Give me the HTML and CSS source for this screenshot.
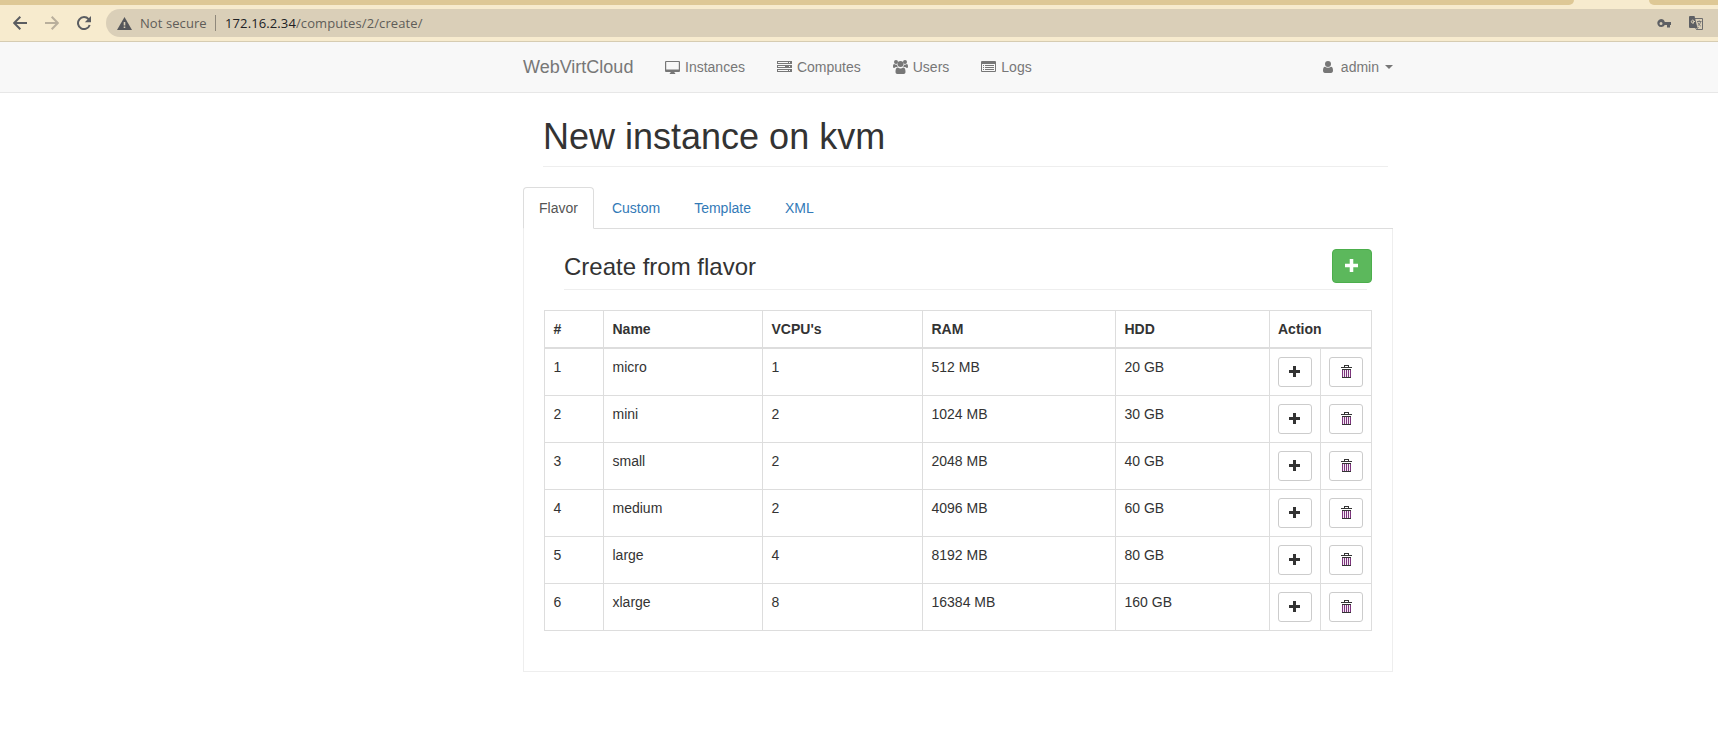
FILE: index.html
```html
<!DOCTYPE html>
<html lang="en">
<head>
<meta charset="utf-8">
<title>WebVirtCloud</title>
<link rel="stylesheet" href="styles.css">
</head>
<body>
<svg class="defs" width="0" height="0" aria-hidden="true">
  <symbol id="plus" viewBox="0 0 11 11"><path d="M4 0h3v4h4v3H7v4H4V7H0V4h4z"/></symbol>
  <symbol id="trash" viewBox="0 0 11 13"><path d="M3 0h5v2h3v1H0V2h3zM4 1v1h3V1z" fill-rule="evenodd" fill="#333"/><path d="M1 4h9v9H1z" fill="#7c357c"/><path d="M2 5h1v7H2zM4 5h1v7H4zM6 5h1v7H6zM8 5h1v7H8z" fill="#f3eaf3"/><path d="M1 4h9v1H1zM1 12h9v1H1z" fill="#333"/></symbol>
</svg>
<div class="browser">
  <div class="tabstrip"><span class="strip-left"></span><span class="strip-right"></span></div>
  <div class="toolbar">
    <svg class="back" width="14" height="14" viewBox="0 0 14 14"><path d="M14 7H1.2M7.3.8L1.2 7l6.1 6.200" /></svg>
    <svg class="forward" width="14" height="14" viewBox="0 0 14 14"><path d="M0 7h12.800M6.700.8L12.800 7l-6.100 6.200"/></svg>
    <svg class="reload" width="14" height="14" viewBox="0 0 14 14"><path d="M12.700 9A6 6 0 1 1 11.600 3.200" fill="none" stroke="#5b5d61" stroke-width="2"/><path d="M14 0v6.200H7.800z" fill="#5b5d61"/></svg>
    <div class="address">
      <svg class="warn" width="15" height="13" viewBox="0 0 15 13"><path d="M7.500 0L15 13H0z" fill="#55575b"/><path d="M6.700 5h1.600v3.500H6.700zM6.700 9.500h1.600V11H6.700z" fill="#dacfb8"/></svg>
      <span class="notsecure">Not secure</span>
      <span class="sep"></span>
      <span class="url"><b>172.16.2.34</b>/computes/2/create/</span>
      <svg class="key" width="14" height="9" viewBox="0 0 14 9"><path d="M4 0a4 4 0 0 1 3.800 3H14v3h-1v2.500h-3V6H7.800A4 4 0 1 1 4 0zM4 3a1.500 1.500 0 1 0 0 3 1.500 1.500 0 0 0 0-3z" fill="#5d5f63" fill-rule="evenodd"/></svg>
      <svg class="translate" width="14" height="14" viewBox="0 0 14 14"><path d="M6 2.500h7.500v11H7.500L6 11" fill="none" stroke="#6d6d6d"/><path d="M1 0h4.500l3 12H1a1 1 0 0 1-1-1V1a1 1 0 0 1 1-1z" fill="#5d5f63"/><path d="M6 5.500H4.200V6.600H5A1.500 1.500 0 1 1 4.800 4.500" fill="none" stroke="#dacfb8"/><path d="M8 5.500h4.500M10.200 4.300v1.200M11.700 5.500c-.4 2-1.500 3.300-3 4.300M8.800 6.500c.7 1.500 1.700 2.700 3 3.600M7.500 13.500l2-2.500" fill="none" stroke="#6d6d6d" stroke-width=".9"/></svg>
    </div>
  </div>
</div>
<header class="navbar">
  <nav class="container nav">
    <a class="brand">WebVirtCloud</a>
    <a class="item instances"><svg width="15" height="13" viewBox="0 0 15 13"><path d="M1 0h13a1 1 0 0 1 1 1v9a1 1 0 0 1-1 1H9.500v1h.7v1H4.800v-1h.7v-1H1a1 1 0 0 1-1-1V1a1 1 0 0 1 1-1zm.2 1v7.500h12.600V1z" fill-rule="evenodd"/></svg>Instances</a>
    <a class="item"><svg width="15" height="12" viewBox="0 0 15 12"><path d="M0 0h15v3H0zM1 1v1h10V1zM12 1v1h1V1zM0 4h15v3H0zM1 5v1h7V5zM12 5v1h1V5zM0 8h15v3H0zM1 9v1h10V9zM12 9v1h1V9z" fill-rule="evenodd"/></svg>Computes</a>
    <a class="item users"><svg width="15" height="14" viewBox="0 0 15 14"><circle cx="3" cy="2" r="2"/><circle cx="12" cy="2" r="2"/><circle cx="7.500" cy="4" r="3"/><path d="M0 6.500C0 5 .3 4 1.200 4c.8.700 2.300.8 3 .4C4 5.400 4.300 6.300 4.900 7H3C2 7 1.500 8 1.500 8 .5 8 0 7.500 0 6.500zM15 6.500C15 5 14.700 4 13.800 4c-.8.700-2.300.8-3 .4.2 1-.1 1.900-.7 2.600H12c1 0 1.500 1 1.500 1 1 0 1.500-.5 1.500-1.500zM2.500 12c0-2.500.5-4.500 2.400-4.500 1.600 1.200 3.600 1.200 5.200 0 1.900 0 2.400 2 2.400 4.500 0 1.300-.7 2-1.800 2H4.300c-1.100 0-1.800-.7-1.800-2z"/></svg>Users</a>
    <a class="item logs"><svg width="15" height="12" viewBox="0 0 15 12"><path d="M1 0h13a1 1 0 0 1 1 1v9a1 1 0 0 1-1 1H1a1 1 0 0 1-1-1V1a1 1 0 0 1 1-1zm0 3v7h13V3zM2 4h1v1H2zM4 4h9v1H4zM2 6h1v1H2zM4 6h9v1H4zM2 8h1v1H2zM4 8h9v1H4z" fill-rule="evenodd"/></svg>Logs</a>
    <a class="admin"><svg width="10" height="12" viewBox="0 0 10 12"><circle cx="5" cy="3" r="3"/><path d="M0 9.500C0 7.500.6 5.800 2 5.800c1.800 1.400 4.200 1.400 6 0 1.400 0 2 1.700 2 3.700 0 1.600-.7 2.500-2 2.500H2c-1.300 0-2-.9-2-2.500z"/></svg>admin<span class="caret"></span></a>
  </nav>
</header>
<main class="container">
  <h1 class="page-header">New instance on kvm</h1>
  <div class="tabs"><a class="tab active">Flavor</a><a class="tab">Custom</a><a class="tab">Template</a><a class="tab">XML</a></div>
  <section class="panel">
    <div class="panel-head">
      <h3>Create from flavor</h3>
      <button class="add"><svg width="13" height="13"><use href="#plus"/></svg></button>
    </div>
    <table class="flavors">
      <colgroup><col class="c-id"><col class="c-name"><col class="c-cpu"><col class="c-ram"><col class="c-hdd"><col class="c-act"><col class="c-act"></colgroup>
      <thead><tr><th>#</th><th>Name</th><th>VCPU's</th><th>RAM</th><th>HDD</th><th colspan="2">Action</th></tr></thead>
      <tbody>
        <tr><td>1</td><td>micro</td><td>1</td><td>512 MB</td><td>20 GB</td><td><button class="btn"><svg width="11" height="11"><use href="#plus"/></svg></button></td><td><button class="btn del"><svg width="11" height="13"><use href="#trash"/></svg></button></td></tr>
        <tr><td>2</td><td>mini</td><td>2</td><td>1024 MB</td><td>30 GB</td><td><button class="btn"><svg width="11" height="11"><use href="#plus"/></svg></button></td><td><button class="btn del"><svg width="11" height="13"><use href="#trash"/></svg></button></td></tr>
        <tr><td>3</td><td>small</td><td>2</td><td>2048 MB</td><td>40 GB</td><td><button class="btn"><svg width="11" height="11"><use href="#plus"/></svg></button></td><td><button class="btn del"><svg width="11" height="13"><use href="#trash"/></svg></button></td></tr>
        <tr><td>4</td><td>medium</td><td>2</td><td>4096 MB</td><td>60 GB</td><td><button class="btn"><svg width="11" height="11"><use href="#plus"/></svg></button></td><td><button class="btn del"><svg width="11" height="13"><use href="#trash"/></svg></button></td></tr>
        <tr><td>5</td><td>large</td><td>4</td><td>8192 MB</td><td>80 GB</td><td><button class="btn"><svg width="11" height="11"><use href="#plus"/></svg></button></td><td><button class="btn del"><svg width="11" height="13"><use href="#trash"/></svg></button></td></tr>
        <tr><td>6</td><td>xlarge</td><td>8</td><td>16384 MB</td><td>160 GB</td><td><button class="btn"><svg width="11" height="11"><use href="#plus"/></svg></button></td><td><button class="btn del"><svg width="11" height="13"><use href="#trash"/></svg></button></td></tr>
      </tbody>
    </table>
  </section>
</main>
</body>
</html>
```
FILE: styles.css
```css
* { box-sizing: border-box; }
body { margin: 0; background: #fff; color: #333; font: 14px/20px "Liberation Sans", Arial, sans-serif; overflow: hidden; }
svg { display: block; flex: none; }
.defs { position: absolute; }

.browser { height: 42px; background: #f7ebce; border-bottom: 1px solid #d6ccb2; }
.tabstrip { display: flex; justify-content: space-between; height: 5px; }
.strip-left { width: 1574px; background: #dec896; border-bottom-right-radius: 6px; }
.strip-right { width: 69px; background: #dec896; border-bottom-left-radius: 6px; }
.toolbar { display: flex; align-items: center; height: 36px; padding-left: 13px; }
.back, .forward { fill: none; stroke: #5b5d61; stroke-width: 2; }
.forward { stroke: #b9af9c; margin-left: 18px; }
.reload { margin-left: 18px; }
.address { display: flex; align-items: center; flex: 1; height: 28px; margin-left: 15px; padding-left: 11px; background: #dacfb8; border-radius: 14px 0 0 14px; font: 14px/20px "Open Sans", "Noto Sans", sans-serif; color: #5f5d58; }
.notsecure { width: 67px; margin-left: 8px; font-size: 13px; letter-spacing: .08px; white-space: nowrap; }
.sep { width: 1px; height: 16px; margin: 0 9px 0 8px; background: #8f887b; }
.url { white-space: nowrap; font-size: 13px; letter-spacing: .11px; }
.url b { font-weight: 400; color: #202124; }
.key { margin-left: auto; }
.translate { margin: 0 15px 0 18px; }

.container { width: 870px; margin-left: 523px; }
.navbar { height: 51px; background: #f8f8f8; border-bottom: 1px solid #e7e7e7; color: #777; }
.nav { display: flex; align-items: center; height: 50px; fill: #777; }
.brand { width: 142px; font-size: 18px; }
.item { display: flex; align-items: center; gap: 5px; margin-right: 32px; }
.admin { display: flex; align-items: center; margin-left: auto; }
.admin svg { margin-right: 8px; }
.caret { margin-left: 6px; border: 4px solid transparent; border-top-color: #777; border-bottom: 0; }

.page-header { height: 54px; margin: 20px 5px 20px 20px; padding-top: 4px; border-bottom: 1px solid #eee; font-size: 36px; font-weight: 400; line-height: 40px; }
.tabs { display: flex; gap: 2px; height: 42px; border-bottom: 1px solid #ddd; color: #337ab7; }
.tab { height: 42px; padding: 10px 15px; border: 1px solid transparent; border-radius: 4px 4px 0 0; }
.tab.active { color: #555; background: #fff; border-color: #ddd #ddd #fff; }
.panel { height: 443px; padding: 20px; border: 1px solid #eee; border-top: 0; }
.panel-head { display: flex; height: 41px; margin: 0 5px 20px 20px; border-bottom: 1px solid #eee; }
h3 { margin: 0; font-size: 24px; font-weight: 400; line-height: 35px; }
.add { display: flex; align-items: center; justify-content: center; width: 40px; height: 34px; margin: 0 -5px 0 auto; padding: 0 1px 1px 0; background: #5cb85c; border: 1px solid #4cae4c; border-radius: 4px; fill: #fff; }
.flavors { width: 828px; table-layout: fixed; border-collapse: separate; border-spacing: 0; border: 1px solid #ddd; border-width: 1px 0 0 1px; }
.c-id { width: 59px; }
.c-name { width: 159px; }
.c-cpu { width: 160px; }
.c-ram { width: 193px; }
.c-hdd { width: 154px; }
.c-act { width: 51px; }
.flavors th, .flavors td { padding: 8px; border: 1px solid #ddd; border-width: 0 1px 1px 0; text-align: left; vertical-align: top; }
.flavors th { height: 38px; border-bottom-width: 2px; }
.flavors td { height: 47px; }
.flavors th:nth-child(-n+5), .flavors td:nth-child(-n+5) { padding-left: 8.5px; }
.btn { display: flex; align-items: center; justify-content: center; width: 34px; height: 30px; padding: 0 1px 1px 0; background: #fff; border: 1px solid #ccc; border-radius: 3px; fill: #333; }
.btn.del { padding: 0 0 2px 1px; }
```
